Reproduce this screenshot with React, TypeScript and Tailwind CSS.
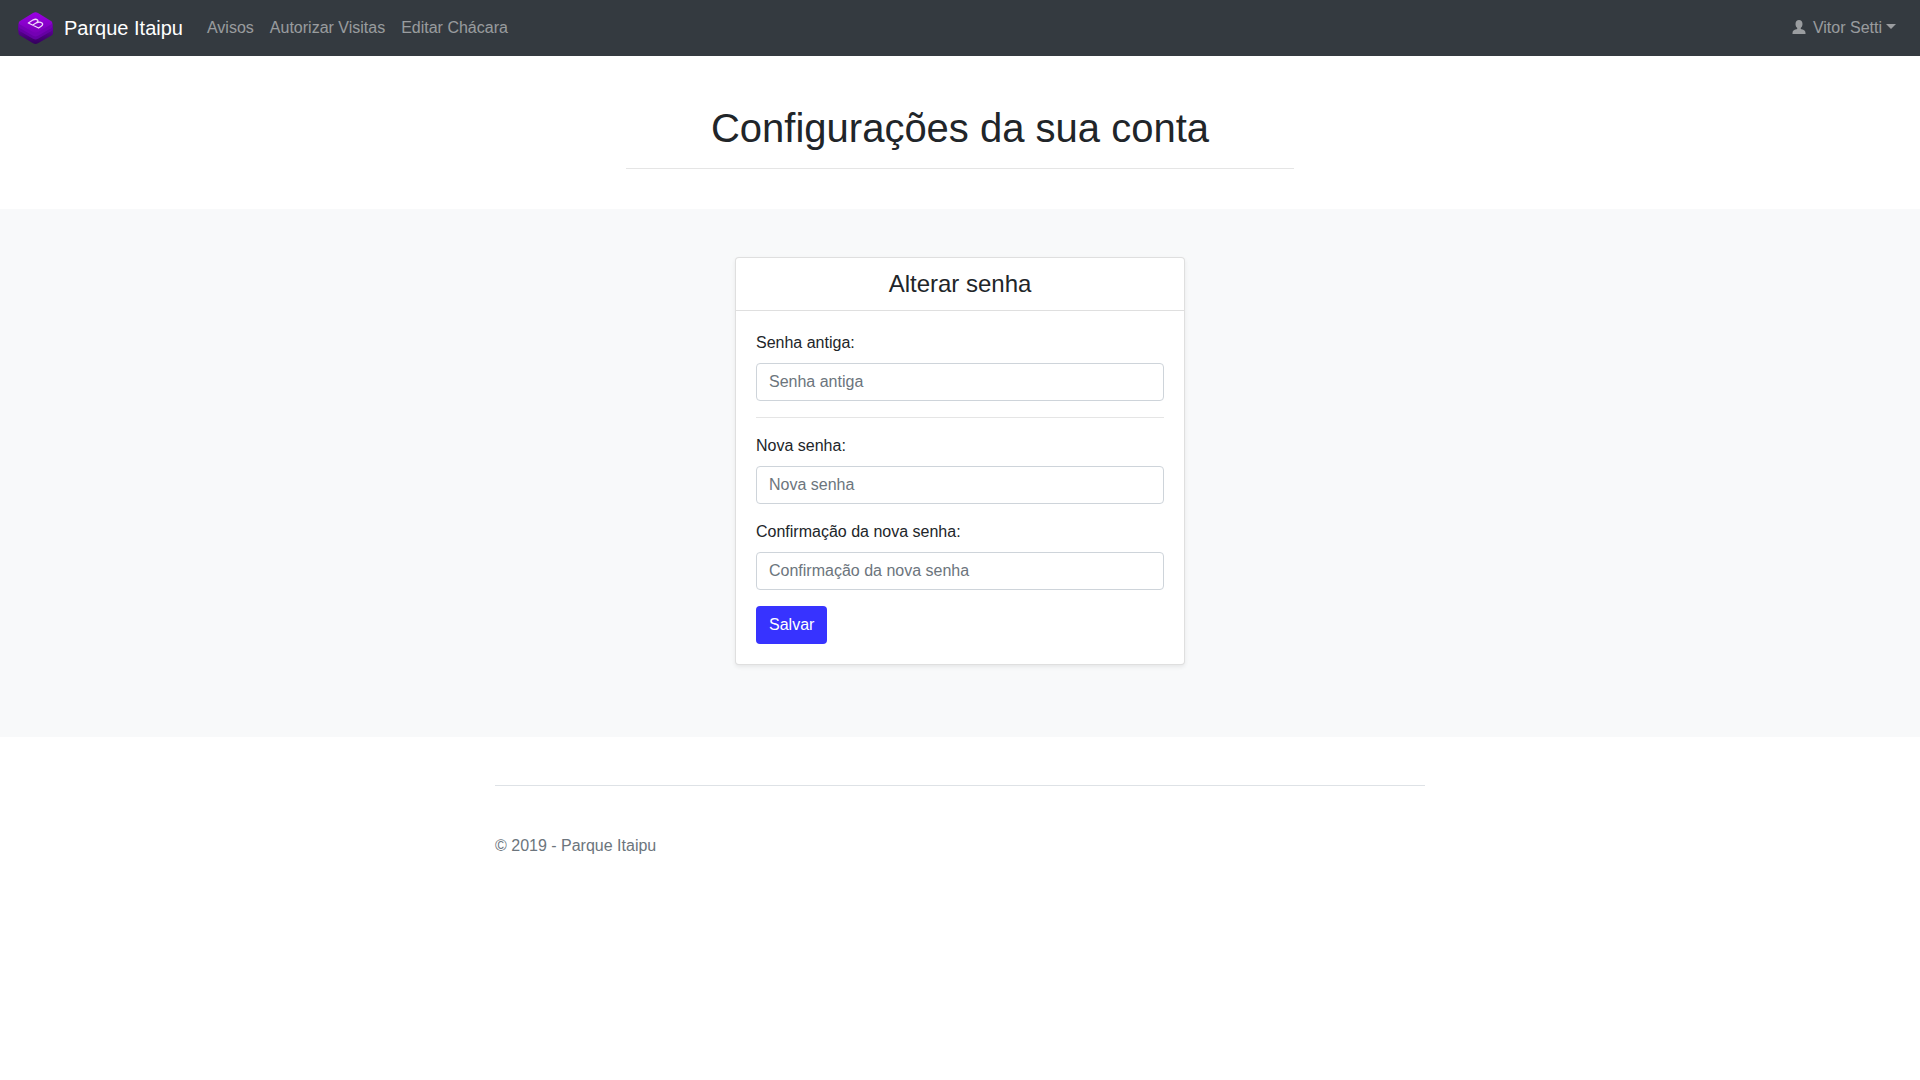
import React from "react";

const links = ["Avisos", "Autorizar Visitas", "Editar Chácara"];

function Logo() {
  return (
    <svg viewBox="0 0 38 38" className="size-[38px]" aria-hidden="true">
      <defs>
        <linearGradient id="top" x1="0" y1="0" x2="0" y2="1">
          <stop offset="0" stopColor="#9b00e3" />
          <stop offset="1" stopColor="#7a00b8" />
        </linearGradient>
        <linearGradient id="base" x1="0" y1="0" x2="0" y2="1">
          <stop offset="0" stopColor="#6a00a8" />
          <stop offset="1" stopColor="#33005c" />
        </linearGradient>
      </defs>
      <path d="M2 19 Q2 17.5 4 16.5 L34 16.5 Q37 17.5 37 19 V24 Q37 25.500 35.500 26.500 L22 34.200 Q19.500 35.600 17 34.200 L4 26.500 Q2.500 25.500 2.500 24 Z" fill="url(#base)" />
      <path d="M2.500 15 H36.500 V20 Q36.500 21.300 35 22.200 L22 29.800 Q19.500 31.200 17 29.800 L4 22.200 Q2.500 21.300 2.500 20 Z" fill="#6500a3" />
      <path d="M2.500 14 H36.500 V17 Q36.500 18.300 35 19.200 L22 26.800 Q19.500 28.200 17 26.800 L4 19.200 Q2.500 18.300 2.500 17 Z" fill="#7400b4" />
      <path d="M17 4 Q19.500 2.500 22 4 L35 12 Q37.500 13.700 35 15.400 L22 23 Q19.500 24.400 17 23 L4 15.400 Q1.500 13.700 4 12 Z" fill="url(#top)" />
      <path d="M12.300 14 L17.300 10.800 Q19.800 9.600 21.500 11 Q22.800 12.300 20.400 13.800 Q23.800 12.300 26 14 Q27.600 15.700 25.200 17.300 L22.600 19 Z M16.800 16 L20.400 13.800" fill="none" stroke="#f0d9fa" strokeWidth="1.3" strokeLinejoin="round" />
    </svg>
  );
}

function Field({ id, label }: { id: string; label: string }) {
  return (
    <div className="mb-4">
      <label htmlFor={id} className="mb-2 block">
        {label}:
      </label>
      <input
        id={id}
        type="password"
        placeholder={label}
        className="block h-[38px] w-full rounded border border-[#ced4da] bg-white px-3 py-1.5 text-[#495057] placeholder:text-[#6c757d]"
      />
    </div>
  );
}

export default function App() {
  return (
    <div className="min-h-screen bg-white font-['Liberation_Sans',Arial,sans-serif] text-base leading-6 text-[#212529]">
      <nav className="flex h-14 items-center bg-[#343a40] px-4">
        <a href="#" className="mr-4 flex items-center gap-2.5 text-xl text-white">
          <Logo />
          Parque Itaipu
        </a>
        <div className="flex flex-1">
          {links.map((text) => (
            <a key={text} href="#" className="p-2 text-white/50">
              {text}
            </a>
          ))}
        </div>
        <button type="button" className="flex items-center p-2 text-white/50">
          <svg viewBox="0 0 14 16" className="mr-[7px] h-4 w-3.5" fill="currentColor" aria-hidden="true">
            <path d="M7 0C4.900 0 3.500 1.600 3.500 3.900C3.500 5.900 4.300 7.200 5.300 7.900C5.300 8.700 5 9 4.200 9.300C2 10 .5 10.600 .5 13V14H13.500V13C13.500 10.600 12 10 9.800 9.300C9 9 8.700 8.700 8.700 7.900C9.700 7.200 10.500 5.900 10.500 3.900C10.500 1.600 9.100 0 7 0Z" />
          </svg>
          Vitor Setti
          <svg viewBox="0 0 10 8" className="ml-1 h-2 w-2.5" fill="currentColor" aria-hidden="true">
            <path d="M0 0H10L5 5Z" />
          </svg>
        </button>
      </nav>

      <header className="px-4 pt-12 pb-10">
        <div className="mx-auto max-w-[668px] border-b border-black/10 pb-4 text-center">
          <h1 className="text-[40px] leading-[48px]">Configurações da sua conta</h1>
        </div>
      </header>

      <main className="bg-[#f8f9fa] px-4 pt-12 pb-[72px]">
        <section className="mx-auto max-w-[450px] rounded border border-black/[.125] bg-white shadow-[0_2px_4px_rgba(0,0,0,0.075)]">
          <h2 className="border-b border-black/[.125] px-5 py-3 text-center text-2xl leading-7">Alterar senha</h2>
          <form className="p-5">
            <Field id="old-password" label="Senha antiga" />
            <hr className="mb-4 border-black/10" />
            <Field id="new-password" label="Nova senha" />
            <Field id="confirm-password" label="Confirmação da nova senha" />
            <button type="button" className="block h-[38px] rounded bg-[#3733ff] px-[13px] text-white">
              Salvar
            </button>
          </form>
        </section>
      </main>

      <footer className="mx-auto max-w-[960px] px-[15px] pt-12">
        <p className="border-t border-[#dee2e6] py-12 text-[#6c757d]">© 2019 - Parque Itaipu</p>
      </footer>
    </div>
  );
}
